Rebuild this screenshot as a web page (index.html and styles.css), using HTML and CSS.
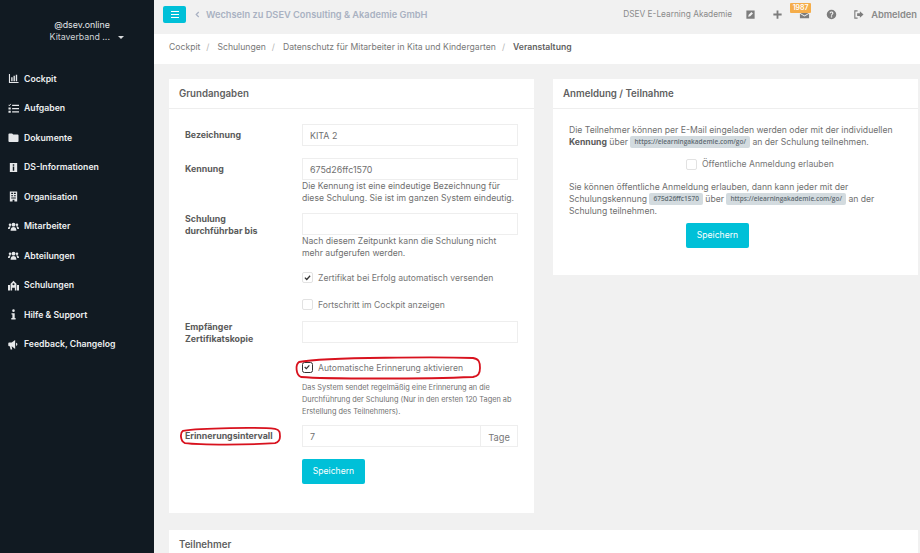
FILE: index.html
```html
<!DOCTYPE html>
<html lang="de">
<head>
    <meta charset="UTF-8">
    <meta name="viewport" content="width=device-width, initial-scale=1.0">
    <link rel="stylesheet" href="styles.css">
</head>
<body>
    <div class="layout">
        <aside class="sidebar">
            <div class="profile">
                <div class="profile-mail">@dsev.online</div>
                <div class="profile-org">Kitaverband ... <span class="caret"></span></div>
            </div>
            <nav class="menu">
                <a class="menu-item"><svg viewBox="0 0 12 12"><path d="M1 1v10h10.500v-1.200H2.200V1z"/><path d="M3.500 4.500h1.500V9H3.500zM6 3h1.500v6H6zM8.500 2H10v7H8.500z"/></svg>Cockpit</a>
                <a class="menu-item"><svg viewBox="0 0 12 12"><path d="M4.500 2h7.500v1.300H4.500zM4.500 5.500h7.500v1.300H4.500zM4.500 9h7.500v1.300H4.500zM.5 5h2.500v2H.5zM.5 8.500h2.500v2H.5z"/><path d="M.5 2l1 1 1.500-2" fill="none" stroke="#fff" stroke-width=".9"/></svg>Aufgaben</a>
                <a class="menu-item"><svg viewBox="0 0 12 12"><path d="M.5 2.500A1 1 0 0 1 1.500 1.500h3l1.200 1.300h4.800a1 1 0 0 1 1 1v6a1 1 0 0 1-1 1h-9a1 1 0 0 1-1-1z"/></svg>Dokumente</a>
                <a class="menu-item"><svg viewBox="0 0 12 12"><path fill-rule="evenodd" d="M2 1h8v10H2zM5.200 2.500v1.500h1.600V2.500zM5.200 5v4.500h1.600V5z"/></svg>DS-Informationen</a>
                <a class="menu-item"><svg viewBox="0 0 12 12"><path fill-rule="evenodd" d="M2 .5h8v11H7V9.500H5v2H2zM3.500 2v1.300h2V2zM6.500 2v1.300h2V2zM3.500 4.500v1.300h2V4.500zM6.500 4.500v1.300h2V4.500zM3.500 7v1.300h5V7z"/></svg>Organisation</a>
                <a class="menu-item"><svg viewBox="0 0 12 12"><circle cx="6" cy="4" r="2.100"/><circle cx="2.200" cy="4" r="1.400"/><circle cx="9.800" cy="4" r="1.400"/><path d="M2.800 10.500C2.800 7.600 4.300 6.500 6 6.500s3.200 1.100 3.200 4zM0 8.800c0-2 1-3.100 2.400-3.100l.6.500C2.200 7 1.900 7.800 1.900 8.800zM12 8.800c0-2-1-3.100-2.400-3.100l-.6.500c.8.800 1.100 1.600 1.100 2.600z"/></svg>Mitarbeiter</a>
                <a class="menu-item"><svg viewBox="0 0 12 12"><circle cx="6" cy="4" r="2.100"/><circle cx="2.200" cy="4" r="1.400"/><circle cx="9.800" cy="4" r="1.400"/><path d="M2.800 10.500C2.800 7.600 4.300 6.500 6 6.500s3.200 1.100 3.200 4zM0 8.800c0-2 1-3.100 2.400-3.100l.6.500C2.200 7 1.900 7.800 1.900 8.800zM12 8.800c0-2-1-3.100-2.400-3.100l-.6.500c.8.800 1.100 1.600 1.100 2.600z"/></svg>Abteilungen</a>
                <a class="menu-item"><svg viewBox="0 0 12 12"><path fill-rule="evenodd" d="M2.800 11.500V4L6 .8 9.200 4v7.500H7.500V8.500h-3v3zM4.900 4.700a1.100 1.100 0 1 0 2.200 0 1.100 1.100 0 1 0-2.200 0z"/><path d="M0 5.500h2.200v6H0zM9.800 5.500H12v6H9.800z"/></svg>Schulungen</a>
                <a class="menu-item"><svg viewBox="0 0 12 12"><circle cx="6" cy="1.800" r="1.400"/><path d="M3.800 4.500h3.500v5.200h1V11.500H3.600V9.700h1.200V6H3.800z"/></svg>Hilfe &amp; Support</a>
                <a class="menu-item"><svg viewBox="0 0 12 12"><path d="M7.800 1L4 3.800H1.300a1 1 0 0 0-1 1v2a1 1 0 0 0 1 1H2L2.800 11.500h1.800L4 8 7.800 10.800zM8.800 4a1.900 1.900 0 0 1 0 3.700z"/></svg>Feedback, Changelog</a>
            </nav>
        </aside>

        <div class="main">
            <header class="topbar">
                <button class="toggle"><span></span><span></span><span></span></button>
                <a class="switch"><svg class="chev" viewBox="0 0 6 8"><path d="M4.500 1L1.500 4l3 3" fill="none" stroke="#a9b1c2" stroke-width="1.500"/></svg>Wechseln zu DSEV Consulting &amp; Akademie GmbH</a>
                <div class="topbar-right">
                    <span class="academy">DSEV E-Learning Akademie</span>
                    <svg class="top-icon" viewBox="0 0 12 12"><path fill-rule="evenodd" d="M1.500 1.500h9v9h-9zM3.500 8.500l2.200-.5 3-3-1.700-1.700-3 3z"/></svg>
                    <svg class="top-icon" viewBox="0 0 12 12"><path d="M5 1.500h2V5h3.500v2H7v3.500H5V7H1.500V5H5z"/></svg>
                    <span class="mail"><svg class="top-icon" viewBox="0 0 12 12"><path d="M1 3h10v1L6 7 1 4zM1 5.300L6 8.300l5-3V10H1z"/></svg><span class="badge">1987</span></span>
                    <svg class="top-icon" viewBox="0 0 12 12"><path fill-rule="evenodd" d="M6 .8a5.200 5.200 0 1 0 0 10.400A5.200 5.200 0 0 0 6 .8zM5.300 8h1.400v1.300H5.300zM3.900 4.600C4 3.400 4.900 2.800 6 2.800c1.200 0 2.100.7 2.100 1.800 0 1.500-1.500 1.400-1.500 2.700H5.400c0-1.800 1.400-1.800 1.400-2.700 0-.4-.3-.7-.8-.7s-.8.300-.9.800z"/></svg>
                    <a class="logout"><svg class="top-icon" viewBox="0 0 12 12"><path d="M5 2H2v8h3" fill="none" stroke="#7d7d7d" stroke-width="1.200"/><path d="M7.500 2.500L11.500 6l-4 3.500V7.500H4.500v-3h3z"/></svg>Abmelden</a>
                </div>
            </header>

            <div class="breadcrumb">
                <span>Cockpit</span><i>/</i><span>Schulungen</span><i>/</i><span>Datenschutz für Mitarbeiter in Kita und Kindergarten</span><i>/</i><b>Veranstaltung</b>
            </div>

            <div class="content">
                <section class="card card-left">
                    <h2 class="card-title">Grundangaben</h2>
                    <form class="form">
                        <div class="row row-first">
                            <label class="row-label">Bezeichnung</label>
                            <div class="row-field"><div class="input">KITA 2</div></div>
                        </div>
                        <div class="row row-code">
                            <label class="row-label">Kennung</label>
                            <div class="row-field">
                                <div class="input">675d26ffc1570</div>
                                <p class="help">Die Kennung ist eine eindeutige Bezeichnung für diese Schulung. Sie ist im ganzen System eindeutig.</p>
                            </div>
                        </div>
                        <div class="row row-until">
                            <label class="row-label row-label-two">Schulung<br>durchführbar bis</label>
                            <div class="row-field">
                                <div class="input"></div>
                                <p class="help">Nach diesem Zeitpunkt kann die Schulung nicht mehr aufgerufen werden.</p>
                            </div>
                        </div>
                        <div class="row row-check1">
                            <div></div>
                            <div class="check-line"><span class="check"><svg viewBox="0 0 12 12"><path d="M2.500 6.200l2.500 2.500 4.500-5" fill="none" stroke="#333" stroke-width="1.700"/></svg></span>Zertifikat bei Erfolg automatisch versenden</div>
                        </div>
                        <div class="row row-check2">
                            <div></div>
                            <div class="check-line"><span class="check"></span>Fortschritt im Cockpit anzeigen</div>
                        </div>
                        <div class="row row-copy">
                            <label class="row-label row-label-two">Empfänger<br>Zertifikatskopie</label>
                            <div class="row-field"><div class="input"></div></div>
                        </div>
                        <div class="row row-auto">
                            <div></div>
                            <div class="row-field">
                                <div class="check-line marked">
                                    <span class="check check-dark"><svg viewBox="0 0 12 12"><path d="M2.500 6l2.500 2.500L9.500 3.500" fill="none" stroke="#333" stroke-width="1.800"/></svg></span>Automatische Erinnerung aktivieren
                                    <svg class="ring ring-check" viewBox="0 0 186 23" preserveAspectRatio="none"><path d="M4 6C30 1 150 1 178 2c6 1 7 4 7 10s-2 8-7 9C130 23 30 23 6 21 1 19 0 9 4 6z"/></svg>
                                </div>
                                <p class="help help-small">Das System sendet regelmäßig eine Erinnerung an die Durchführung der Schulung (Nur in den ersten 120 Tagen ab Erstellung des Teilnehmers).</p>
                            </div>
                        </div>
                        <div class="row row-interval">
                            <label class="row-label marked">Erinnerungsintervall
                                <svg class="ring ring-label" viewBox="0 0 101 19" preserveAspectRatio="none"><path d="M3 4C20 1 80 0 95 2c5 1 5 4 5 8s-1 6-5 7C70 19 20 19 5 17 0 15 0 6 3 4z"/></svg>
                            </label>
                            <div class="input-group"><div class="input">7</div><span class="addon">Tage</span></div>
                        </div>
                        <div class="row row-save">
                            <div></div>
                            <div><button type="button" class="btn">Speichern</button></div>
                        </div>
                    </form>
                </section>

                <section class="card card-right">
                    <h2 class="card-title">Anmeldung / Teilnahme</h2>
                    <div class="card-body">
                        <p class="text">Die Teilnehmer können per E-Mail eingeladen werden oder mit der individuellen <b>Kennung</b> über <code>https://elearningakademie.com/go/</code> an der Schulung teilnehmen.</p>
                        <div class="check-line public"><span class="check"></span>Öffentliche Anmeldung erlauben</div>
                        <p class="text">Sie können öffentliche Anmeldung erlauben, dann kann jeder mit der Schulungskennung <code>675d26ffc1570</code> über <code>https://elearningakademie.com/go/</code> an der Schulung teilnehmen.</p>
                        <button type="button" class="btn btn-public">Speichern</button>
                    </div>
                </section>

                <section class="card card-wide">
                    <h2 class="card-title">Teilnehmer</h2>
                </section>
            </div>
        </div>
    </div>
</body>
</html>
```

FILE: styles.css
```css
html, body {
    height: 100%;
    overflow: hidden;
}

body {
    margin: 0;
    font-family: "Inter", "Open Sans", sans-serif;
    font-size: 8.65px;
    color: #6f6f6f;
    background-color: #f1f1f1;
}

.layout {
    display: flex;
    height: 553px;
}

/* sidebar */
.sidebar {
    width: 154px;
    flex: none;
    background-color: #111a22;
    color: #fff;
}

.profile {
    padding-top: 19px;
    height: 46.500px;
    text-align: center;
    padding-left: 10px;
    line-height: 12px;
    font-size: 8.800px;
    color: #e4e6e8;
}

.profile-org {
    padding-left: 10px;
    color: #cfd2d5;
}

.caret {
    display: inline-block;
    margin-left: 6px;
    vertical-align: middle;
    border: 3px solid transparent;
    border-top-color: #d8dadc;
    border-bottom: 0;
}

.menu {
    margin-top: -1.500px;
}

.menu-item {
    display: flex;
    align-items: center;
    gap: 5px;
    height: 29.500px;
    padding-left: 8px;
    font-size: 8.700px;
    font-weight: 600;
    color: #eceef0;
}

.menu-item svg {
    width: 11px;
    height: 11px;
    fill: #e6e8ea;
    flex: none;
}

/* top bar */
.main {
    flex: 1;
    min-width: 0;
}

.topbar {
    height: 34px;
    display: flex;
    align-items: center;
    padding: 0 3px 0 9px;
    box-sizing: border-box;
}

.toggle {
    width: 23px;
    height: 17px;
    margin: 0 9px 6px 0;
    padding: 0;
    border: none;
    border-radius: 2px;
    background-color: #00c0d8;
    display: flex;
    flex-direction: column;
    align-items: center;
    justify-content: center;
    gap: 2px;
}

.toggle span {
    width: 8px;
    height: 1px;
    background-color: #fff;
}

.switch {
    display: flex;
    align-items: center;
    gap: 6px;
    margin-bottom: 6px;
    font-size: 9.250px;
    font-weight: 600;
    color: #a9b1c2;
}

.chev {
    width: 5px;
    height: 7px;
}

.topbar-right {
    margin-left: auto;
    display: flex;
    align-items: center;
    margin-bottom: 6px;
    color: #8a8a8a;
}

.academy {
    margin-right: 13px;
    font-size: 8.300px;
}

.top-icon {
    width: 11px;
    height: 11px;
    fill: #7d7d7d;
    margin-right: 16px;
    flex: none;
}

.mail {
    position: relative;
    display: flex;
}

.badge {
    position: absolute;
    left: -9px;
    top: -6px;
    width: 21px;
    height: 10px;
    line-height: 10px;
    border-radius: 1px;
    text-align: center;
    font-size: 7px;
    font-weight: 600;
    color: #fff;
    background-color: #f5ad4a;
}

.logout {
    display: flex;
    align-items: center;
    font-weight: 600;
    font-size: 9.300px;
    color: #8a8a8a;
}

.logout .top-icon {
    margin-right: 7px;
}

/* breadcrumb */
.breadcrumb {
    height: 30px;
    box-sizing: border-box;
    padding: 0 0 5px 15px;
    display: flex;
    align-items: center;
    background-color: #fff;
    color: #787878;
}

.breadcrumb i {
    margin: 0 8px 0 6px;
    font-style: normal;
    color: #b5b5b5;
}

.breadcrumb b {
    font-weight: 600;
    color: #5f5f5f;
}

/* cards */
.content {
    display: grid;
    grid-template-columns: 365px 365px;
    column-gap: 19px;
    row-gap: 17px;
    padding: 15px 2px 0 15px;
    align-items: start;
}

.card {
    background-color: #fff;
}

.card-left {
    height: 434px;
    grid-row: 1;
    grid-column: 1;
}

.card-right {
    height: 196px;
    grid-row: 1;
    grid-column: 2;
}

.card-wide {
    grid-row: 2;
    grid-column: 1 / 3;
    height: 40px;
}

.card-title {
    margin: 0;
    height: 29px;
    line-height: 29px;
    padding-left: 10px;
    font-size: 9.700px;
    font-weight: 600;
    color: #5f5f5f;
    border-bottom: 1px solid #eeeeee;
}

.card-wide .card-title {
    border-bottom: none;
}

/* form */
.form {
    padding: 0 16px;
}

.row {
    display: grid;
    grid-template-columns: 117px 216px;
    margin-bottom: 12px;
}

.row-first {
    margin-top: 15px;
}

.row-code {
    margin-bottom: 9px;
}

.row-label {
    font-weight: 700;
    color: #5a5a5a;
    line-height: 12px;
    padding-top: 5px;
    font-size: 8.800px;
}

.row-label-two {
    padding-top: 0;
}

.input {
    height: 22px;
    line-height: 21px;
    padding-left: 7px;
    box-sizing: border-box;
    border: 1px solid #eeeeee;
    color: #6f6f6f;
    font-size: 8.900px;
}

.help {
    margin: 0;
    line-height: 12px;
}

.row-until {
    margin-bottom: 12px;
}

.check-line {
    display: flex;
    align-items: center;
    gap: 5px;
    height: 13px;
    color: #777;
}

.check {
    width: 11px;
    height: 11px;
    box-sizing: border-box;
    border: 1px solid #e2e2e2;
    border-radius: 2px;
    background-color: #fff;
    flex: none;
}

.check svg {
    display: block;
    width: 9px;
    height: 9px;
}

.check-dark {
    border: 1.500px solid #333;
    border-radius: 2.500px;
}

.check-dark svg {
    width: 8px;
    height: 8px;
}

.row-check1 {
    margin-bottom: 14px;
}

.row-check2 {
    margin-bottom: 9.500px;
}

.row-copy {
    margin-bottom: 16.500px;
}

.row-auto {
    margin-bottom: 6.500px;
}

.help-small {
    margin-top: 8px;
    font-size: 7.350px;
}

.marked {
    position: relative;
}

.ring {
    position: absolute;
    fill: none;
    stroke: #d8121e;
    stroke-width: 1.800;
    overflow: visible;
}

.ring-check {
    left: -7px;
    top: -5px;
    width: 186px;
    height: 23px;
}

.ring-label {
    left: -5px;
    top: 2px;
    width: 101px;
    height: 18px;
}

.input-group {
    display: flex;
}

.input-group .input {
    flex: 1;
    border-right: none;
}

.addon {
    width: 38px;
    height: 22px;
    box-sizing: border-box;
    border: 1px solid #eeeeee;
    line-height: 24px;
    text-align: center;
    font-size: 9.300px;
    color: #777;
}

.btn {
    width: 63px;
    height: 25px;
    padding: 0;
    border: none;
    border-radius: 2px;
    font-family: inherit;
    font-size: 8.600px;
    color: #fff;
    background-color: #00c0d8;
}

/* right card */
.card-body {
    padding: 15px 16px 0 16px;
}

.text {
    margin: 0;
    line-height: 12px;
}

.text b {
    font-weight: 700;
    color: #5a5a5a;
}

code {
    display: inline-block;
    vertical-align: top;
    height: 12px;
    line-height: 12px;
    padding: 0 4px;
    border-radius: 2px;
    font-family: "Open Sans", sans-serif;
    font-size: 6.500px;
    font-weight: 600;
    color: #5f6b73;
    background-color: #d3dbdf;
}

.public {
    margin: 9.500px 0 10px 117px;
}

.btn-public {
    display: block;
    margin: 6px 0 0 117px;
}
```
